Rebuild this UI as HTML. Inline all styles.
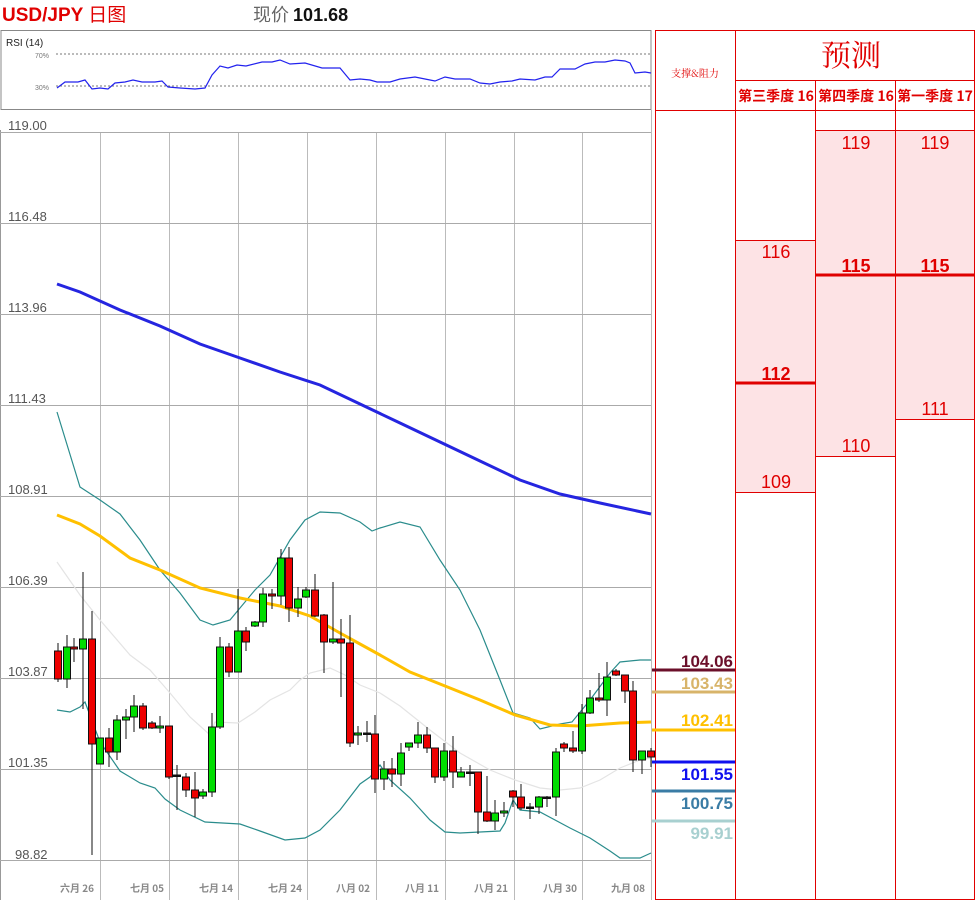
<!DOCTYPE html>
<html><head><meta charset="utf-8"><style>
body{margin:0;background:#fff;width:975px;height:900px;overflow:hidden}
svg{display:block}
</style></head><body>
<svg width="975" height="900" viewBox="0 0 975 900" xmlns="http://www.w3.org/2000/svg" font-family="Liberation Sans, Noto Sans CJK SC, sans-serif">
<rect width="975" height="900" fill="#fff"/>
<text x="2" y="21" font-size="19" font-weight="bold" fill="#e00000">USD/JPY <tspan font-weight="normal" font-family="Noto Sans CJK SC, sans-serif">日图</tspan></text>
<text x="253" y="21" font-size="18" fill="#666" font-family="Noto Sans CJK SC, sans-serif">现价 <tspan fill="#111" font-weight="bold" font-family="Liberation Sans, sans-serif">101.68</tspan></text>
<rect x="1" y="30.5" width="650" height="79" fill="#fff" stroke="#888" stroke-width="1"/>
<text x="6" y="46" font-size="10" fill="#222">RSI (14)</text>
<text x="35" y="58" font-size="7" fill="#777">70%</text>
<text x="35" y="90" font-size="7" fill="#777">30%</text>
<line x1="56" y1="54" x2="650" y2="54" stroke="#777" stroke-dasharray="2,2"/>
<line x1="56" y1="86" x2="650" y2="86" stroke="#777" stroke-dasharray="2,2"/>
<polyline fill="none" stroke="#2222ee" stroke-width="1.2" points="57,88 65,82 78,82 85,80 92,89 100,88 108,89 115,83 125,82 133,80 142,82 155,82 162,81 168,87 180,88 195,89 205,88 212,75 220,66 228,68 237,65 246,66 262,62 272,62 280,60 290,64 305,63 322,68 340,68 350,80 360,79 370,80 377,82 390,82 400,79 415,77 425,79 435,81 445,77 455,79 470,79 480,83 490,84 500,82 512,81 520,79 535,80 545,77 552,77 560,69 575,69 585,64 595,62 605,62 615,60 625,61 630,63 635,73 645,72 651,73"/>
<line x1="0.5" y1="130" x2="0.5" y2="900" stroke="#999"/>
<g stroke="#bbb" stroke-width="1">
<line x1="100.5" y1="132" x2="100.5" y2="900"/><line x1="169.5" y1="132" x2="169.5" y2="900"/><line x1="238.5" y1="132" x2="238.5" y2="900"/><line x1="307.5" y1="132" x2="307.5" y2="900"/><line x1="376.5" y1="132" x2="376.5" y2="900"/><line x1="445.5" y1="132" x2="445.5" y2="900"/><line x1="514.5" y1="132" x2="514.5" y2="900"/><line x1="582.5" y1="132" x2="582.5" y2="900"/><line x1="651.5" y1="110" x2="651.5" y2="900"/>
</g>
<g stroke="#aaa" stroke-width="1">
<line x1="0" y1="132.5" x2="651" y2="132.5"/><line x1="0" y1="223.5" x2="651" y2="223.5"/><line x1="0" y1="314.5" x2="651" y2="314.5"/><line x1="0" y1="405.5" x2="651" y2="405.5"/><line x1="0" y1="496.5" x2="651" y2="496.5"/><line x1="0" y1="587.5" x2="651" y2="587.5"/><line x1="0" y1="678.5" x2="651" y2="678.5"/><line x1="0" y1="769.5" x2="651" y2="769.5"/><line x1="0" y1="860.5" x2="651" y2="860.5"/>
</g>
<g font-size="13" fill="#555">
<text x="8" y="130">119.00</text><text x="8" y="221">116.48</text><text x="8" y="312">113.96</text><text x="8" y="403">111.43</text><text x="8" y="494">108.91</text><text x="8" y="585">106.39</text><text x="8" y="676">103.87</text><text x="8" y="767">101.35</text><text x="15" y="859">98.82</text>
</g>
<g font-size="10" font-weight="bold" fill="#888" text-anchor="middle" font-family="Noto Sans CJK SC, sans-serif">
<text x="77" y="892">六月 26</text><text x="147" y="892">七月 05</text><text x="216" y="892">七月 14</text><text x="285" y="892">七月 24</text><text x="353" y="892">八月 02</text><text x="422" y="892">八月 11</text><text x="491" y="892">八月 21</text><text x="560" y="892">八月 30</text><text x="628" y="892">九月 08</text>
</g>
<polyline fill="none" stroke="#e4e4e4" stroke-width="1.2" points="57,562 80,595 100,620 130,655 150,670 170,693 190,717 210,735 215,722 238,723 255,712 270,700 290,690 300,680 310,673 330,668 345,675 360,685 380,693 400,706 430,730 460,753 490,770 515,780 540,788 560,790 580,788 600,780 620,768 640,760 651,758"/>
<polyline fill="none" stroke="#2a8c8c" stroke-width="1.2" points="57,412 80,487 100,500 120,514 140,540 160,570 180,593 200,620 213,625 230,620 255,590 270,575 290,540 305,520 320,512 340,513 360,522 372,531 380,528 400,522 420,527 440,560 460,590 480,630 500,680 513,713 530,718 540,729 560,724 572,722 590,700 610,673 620,662 640,660 651,660"/>
<polyline fill="none" stroke="#2a8c8c" stroke-width="1.2" points="57,710 70,712 80,707 85,702 100,742 120,771 140,783 155,788 165,799 180,810 205,822 240,824 260,831 285,840 305,838 320,830 340,810 360,784 370,777 380,765 390,780 410,798 430,820 445,832 460,833 480,832 500,831 505,823 513,800 520,810 540,812 570,828 590,838 610,851 620,858 640,858 651,853"/>
<polyline fill="none" stroke="#2525e0" stroke-width="3" points="57,284 80,292 120,310 160,326 200,344 240,358 280,372 320,385 360,404 400,423 440,442 480,461 520,480 560,494 600,503 651,514"/>
<polyline fill="none" stroke="#ffc000" stroke-width="3" points="57,515 80,524 100,536 130,558 160,570 200,588 240,598 280,606 310,616 340,633 360,644 380,655 410,672 440,684 480,700 515,715 550,725 580,726 620,723 651,722"/>
<g stroke="#111" stroke-width="1">
<line x1="58" y1="643" x2="58" y2="682"/><rect x="54.5" y="651" width="7" height="28" fill="#ee0000"/>
<line x1="67" y1="635" x2="67" y2="688"/><rect x="63.5" y="647" width="7" height="32" fill="#00dd00"/>
<line x1="74" y1="638" x2="74" y2="662"/><rect x="70.5" y="647" width="7" height="2" fill="#ee0000"/>
<line x1="83" y1="572" x2="83" y2="709"/><rect x="79.5" y="639" width="7" height="10" fill="#00dd00"/>
<line x1="92" y1="611" x2="92" y2="855"/><rect x="88.5" y="639" width="7" height="105" fill="#ee0000"/>
<line x1="100" y1="738" x2="100" y2="764"/><rect x="96.5" y="738" width="7" height="26" fill="#00dd00"/>
<line x1="109" y1="728" x2="109" y2="767"/><rect x="105.5" y="738" width="7" height="14" fill="#ee0000"/>
<line x1="117" y1="715" x2="117" y2="760"/><rect x="113.5" y="720" width="7" height="32" fill="#00dd00"/>
<line x1="126" y1="709" x2="126" y2="739"/><rect x="122.5" y="717" width="7" height="3" fill="#00dd00"/>
<line x1="134" y1="695" x2="134" y2="732"/><rect x="130.5" y="706" width="7" height="11" fill="#00dd00"/>
<line x1="143" y1="703" x2="143" y2="730"/><rect x="139.5" y="706" width="7" height="22" fill="#ee0000"/>
<line x1="152" y1="721" x2="152" y2="729"/><rect x="148.5" y="723" width="7" height="5" fill="#ee0000"/>
<line x1="160" y1="716" x2="160" y2="733"/><rect x="156.5" y="726" width="7" height="2" fill="#00dd00"/>
<line x1="169" y1="726" x2="169" y2="779"/><rect x="165.5" y="726" width="7" height="51" fill="#ee0000"/>
<line x1="177" y1="765" x2="177" y2="810"/><rect x="173.5" y="775" width="7" height="1.5" fill="#111"/>
<line x1="186" y1="773" x2="186" y2="797"/><rect x="182.5" y="777" width="7" height="13" fill="#ee0000"/>
<line x1="195" y1="772" x2="195" y2="817"/><rect x="191.5" y="790" width="7" height="8" fill="#ee0000"/>
<line x1="203" y1="789" x2="203" y2="799"/><rect x="199.5" y="792" width="7" height="4" fill="#00dd00"/>
<line x1="212" y1="713" x2="212" y2="797"/><rect x="208.5" y="727" width="7" height="65" fill="#00dd00"/>
<line x1="220" y1="637" x2="220" y2="729"/><rect x="216.5" y="647" width="7" height="80" fill="#00dd00"/>
<line x1="229" y1="643" x2="229" y2="677"/><rect x="225.5" y="647" width="7" height="25" fill="#ee0000"/>
<line x1="238" y1="589" x2="238" y2="672"/><rect x="234.5" y="631" width="7" height="41" fill="#00dd00"/>
<line x1="246" y1="627" x2="246" y2="651"/><rect x="242.5" y="631" width="7" height="11" fill="#ee0000"/>
<line x1="255" y1="621" x2="255" y2="627"/><rect x="251.5" y="622" width="7" height="4" fill="#00dd00"/>
<line x1="263" y1="588" x2="263" y2="627"/><rect x="259.5" y="594" width="7" height="28" fill="#00dd00"/>
<line x1="272" y1="589" x2="272" y2="609"/><rect x="268.5" y="594" width="7" height="2" fill="#ee0000"/>
<line x1="281" y1="549" x2="281" y2="605"/><rect x="277.5" y="558" width="7" height="38" fill="#00dd00"/>
<line x1="289" y1="547" x2="289" y2="622"/><rect x="285.5" y="558" width="7" height="50" fill="#ee0000"/>
<line x1="298" y1="587" x2="298" y2="617"/><rect x="294.5" y="599" width="7" height="9" fill="#00dd00"/>
<line x1="306" y1="587" x2="306" y2="598"/><rect x="302.5" y="590" width="7" height="7" fill="#00dd00"/>
<line x1="315" y1="574" x2="315" y2="617"/><rect x="311.5" y="590" width="7" height="26" fill="#ee0000"/>
<line x1="324" y1="614" x2="324" y2="673"/><rect x="320.5" y="615" width="7" height="27" fill="#ee0000"/>
<line x1="333" y1="582" x2="333" y2="644"/><rect x="329.5" y="639" width="7" height="3" fill="#00dd00"/>
<line x1="341" y1="619" x2="341" y2="697"/><rect x="337.5" y="639" width="7" height="4" fill="#ee0000"/>
<line x1="350" y1="615" x2="350" y2="747"/><rect x="346.5" y="643" width="7" height="100" fill="#ee0000"/>
<line x1="358" y1="726" x2="358" y2="745"/><rect x="354.5" y="733" width="7" height="2" fill="#00dd00"/>
<line x1="367" y1="721" x2="367" y2="742"/><rect x="363.5" y="733" width="7" height="1.5" fill="#111"/>
<line x1="375" y1="715" x2="375" y2="793"/><rect x="371.5" y="734" width="7" height="45" fill="#ee0000"/>
<line x1="384" y1="761" x2="384" y2="790"/><rect x="380.5" y="769" width="7" height="10" fill="#00dd00"/>
<line x1="392" y1="758" x2="392" y2="787"/><rect x="388.5" y="769" width="7" height="5" fill="#ee0000"/>
<line x1="401" y1="743" x2="401" y2="786"/><rect x="397.5" y="753" width="7" height="21" fill="#00dd00"/>
<line x1="409" y1="743" x2="409" y2="751"/><rect x="405.5" y="743" width="7" height="4" fill="#00dd00"/>
<line x1="418" y1="722" x2="418" y2="748"/><rect x="414.5" y="735" width="7" height="8" fill="#00dd00"/>
<line x1="427" y1="727" x2="427" y2="753"/><rect x="423.5" y="735" width="7" height="13" fill="#ee0000"/>
<line x1="435" y1="748" x2="435" y2="783"/><rect x="431.5" y="748" width="7" height="29" fill="#ee0000"/>
<line x1="444" y1="743" x2="444" y2="781"/><rect x="440.5" y="751" width="7" height="26" fill="#00dd00"/>
<line x1="453" y1="736" x2="453" y2="788"/><rect x="449.5" y="751" width="7" height="21" fill="#ee0000"/>
<line x1="461" y1="767" x2="461" y2="777"/><rect x="457.5" y="772" width="7" height="5" fill="#00dd00"/>
<line x1="470" y1="765" x2="470" y2="786"/><rect x="466.5" y="772" width="7" height="1.5" fill="#111"/>
<line x1="478" y1="772" x2="478" y2="834"/><rect x="474.5" y="772" width="7" height="40" fill="#ee0000"/>
<line x1="487" y1="776" x2="487" y2="822"/><rect x="483.5" y="812" width="7" height="9" fill="#ee0000"/>
<line x1="495" y1="800" x2="495" y2="830"/><rect x="491.5" y="813" width="7" height="8" fill="#00dd00"/>
<line x1="504" y1="802" x2="504" y2="817"/><rect x="500.5" y="811" width="7" height="2" fill="#00dd00"/>
<line x1="513" y1="790" x2="513" y2="807"/><rect x="509.5" y="791" width="7" height="6" fill="#ee0000"/>
<line x1="521" y1="784" x2="521" y2="810"/><rect x="517.5" y="797" width="7" height="11" fill="#ee0000"/>
<line x1="530" y1="803" x2="530" y2="819"/><rect x="526.5" y="807" width="7" height="1.5" fill="#111"/>
<line x1="539" y1="796" x2="539" y2="814"/><rect x="535.5" y="797" width="7" height="10" fill="#00dd00"/>
<line x1="547" y1="796" x2="547" y2="807"/><rect x="543.5" y="797" width="7" height="1.5" fill="#111"/>
<line x1="556" y1="748" x2="556" y2="816"/><rect x="552.5" y="752" width="7" height="45" fill="#00dd00"/>
<line x1="564" y1="742" x2="564" y2="752"/><rect x="560.5" y="744" width="7" height="4" fill="#ee0000"/>
<line x1="573" y1="731" x2="573" y2="753"/><rect x="569.5" y="748" width="7" height="3" fill="#ee0000"/>
<line x1="582" y1="704" x2="582" y2="754"/><rect x="578.5" y="713" width="7" height="38" fill="#00dd00"/>
<line x1="590" y1="690" x2="590" y2="714"/><rect x="586.5" y="698" width="7" height="15" fill="#00dd00"/>
<line x1="599" y1="673" x2="599" y2="702"/><rect x="595.5" y="698" width="7" height="2" fill="#ee0000"/>
<line x1="607" y1="662" x2="607" y2="716"/><rect x="603.5" y="677" width="7" height="23" fill="#00dd00"/>
<line x1="616" y1="669" x2="616" y2="676"/><rect x="612.5" y="671" width="7" height="4" fill="#ee0000"/>
<line x1="625" y1="675" x2="625" y2="703"/><rect x="621.5" y="675" width="7" height="16" fill="#ee0000"/>
<line x1="633" y1="681" x2="633" y2="772"/><rect x="629.5" y="691" width="7" height="69" fill="#ee0000"/>
<line x1="642" y1="751" x2="642" y2="774"/><rect x="638.5" y="751" width="7" height="9" fill="#00dd00"/>
<line x1="651" y1="748" x2="651" y2="767"/><rect x="647.5" y="751" width="7" height="6" fill="#ee0000"/>
</g>
<rect x="736" y="240" width="80" height="252" fill="#fde3e5"/>
<rect x="816" y="130" width="80" height="327" fill="#fde3e5"/>
<rect x="896" y="130" width="79" height="290" fill="#fde3e5"/>
<g stroke="#e00000" stroke-width="1" fill="none">
<rect x="655.5" y="30.5" width="319" height="869"/>
<line x1="735.5" y1="30" x2="735.5" y2="900"/>
<line x1="815.5" y1="80" x2="815.5" y2="900"/>
<line x1="895.5" y1="80" x2="895.5" y2="900"/>
<line x1="736" y1="80.5" x2="975" y2="80.5"/>
<line x1="655" y1="110.5" x2="975" y2="110.5"/>
<line x1="816" y1="130.5" x2="975" y2="130.5"/>
<line x1="736" y1="240.5" x2="816" y2="240.5"/>
<line x1="736" y1="492.5" x2="816" y2="492.5"/>
<line x1="816" y1="456.5" x2="896" y2="456.5"/>
<line x1="896" y1="419.5" x2="975" y2="419.5"/>
</g>
<g stroke="#e00000" stroke-width="3">
<line x1="736" y1="383" x2="816" y2="383"/>
<line x1="816" y1="275" x2="975" y2="275"/>
</g>
<text x="695" y="77" font-size="10" fill="#e00000" text-anchor="middle" font-family="Noto Serif CJK SC, serif">支撑&amp;阻力</text>
<text x="851" y="66" font-size="30" fill="#e00000" text-anchor="middle" font-family="Noto Serif CJK SC, serif">预测</text>
<g font-size="14" font-weight="bold" fill="#e00000" text-anchor="middle" font-family="Noto Sans CJK SC, sans-serif">
<text x="776" y="101">第三季度 16</text><text x="856" y="101">第四季度 16</text><text x="935" y="101">第一季度 17</text>
</g>
<g font-size="18" fill="#e00000" text-anchor="middle">
<text x="776" y="258">116</text><text x="776" y="380" font-weight="bold">112</text><text x="776" y="488">109</text>
<text x="856" y="149">119</text><text x="856" y="272" font-weight="bold">115</text><text x="856" y="452">110</text>
<text x="935" y="149">119</text><text x="935" y="272" font-weight="bold">115</text><text x="935" y="415">111</text>
</g>
<g stroke-width="3">
<line x1="652" y1="670" x2="735" y2="670" stroke="#6b0f2a"/>
<line x1="652" y1="692" x2="735" y2="692" stroke="#d8b46a"/>
<line x1="652" y1="730" x2="735" y2="730" stroke="#ffc000"/>
<line x1="652" y1="762" x2="735" y2="762" stroke="#1010ee"/>
<line x1="652" y1="791" x2="735" y2="791" stroke="#3a7ca5"/>
<line x1="652" y1="821" x2="735" y2="821" stroke="#a8d0d0"/>
</g>
<g font-size="17" font-weight="bold" text-anchor="end">
<text x="733" y="667" fill="#6b0f2a">104.06</text>
<text x="733" y="689" fill="#d8b46a">103.43</text>
<text x="733" y="726" fill="#ffc000">102.41</text>
<text x="733" y="780" fill="#1010ee">101.55</text>
<text x="733" y="809" fill="#3a7ca5">100.75</text>
<text x="733" y="839" fill="#a8d0d0">99.91</text>
</g>
</svg>
</body></html>
